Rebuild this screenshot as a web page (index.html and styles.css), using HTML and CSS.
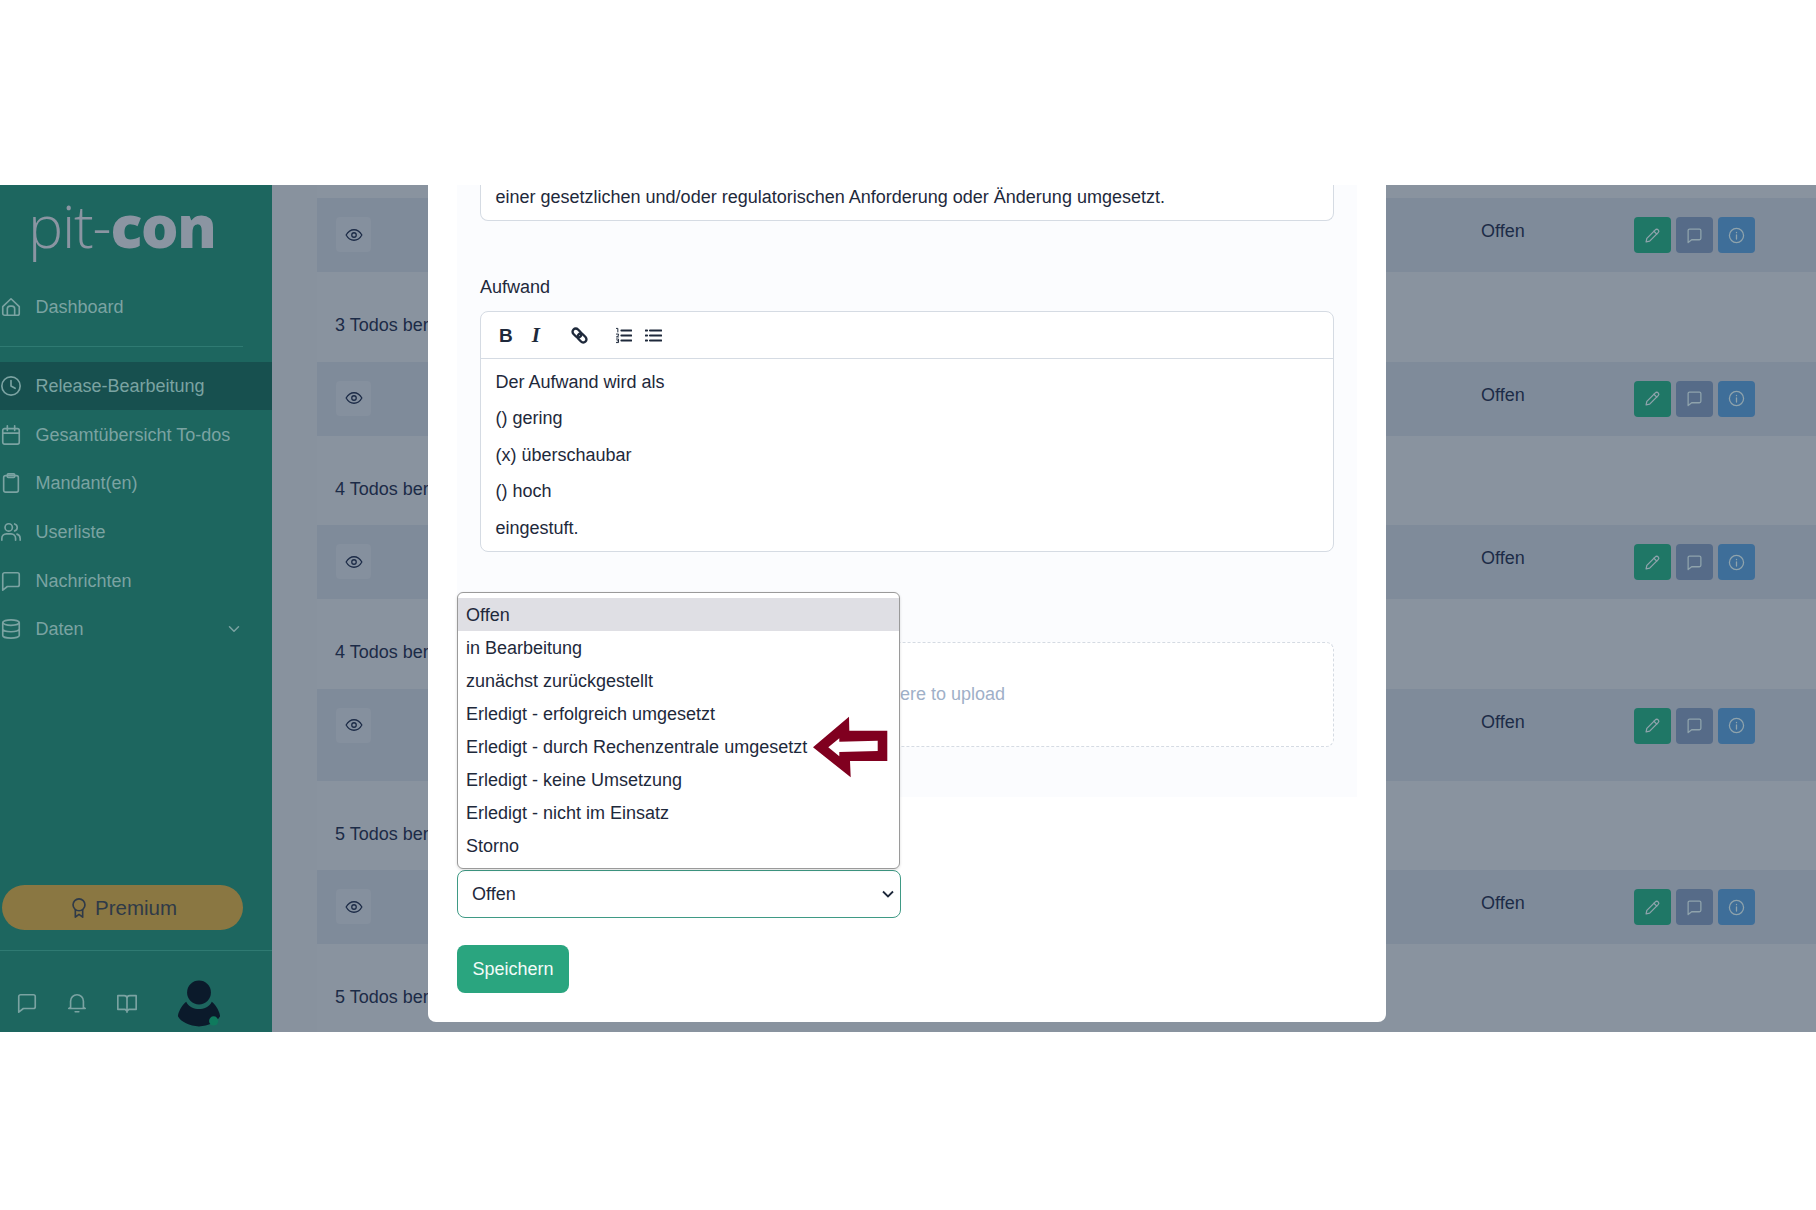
FILE: index.html
```html
<!DOCTYPE html>
<html lang="de">
<head>
<meta charset="utf-8">
<title>pit-con</title>
<link rel="stylesheet" href="styles.css">
</head>
<body>
<svg class="sprite" xmlns="http://www.w3.org/2000/svg">
  <symbol id="i-home" viewBox="0 0 24 24"><path d="M3 11.5 12 3l9 8.5V19a2 2 0 0 1-2 2H5a2 2 0 0 1-2-2z"/><path d="M8 21v-7a3 3 0 0 1 3-3h2a3 3 0 0 1 3 3v7"/></symbol>
  <symbol id="i-clock" viewBox="0 0 24 24"><circle cx="12" cy="12" r="10"/><path d="M12 6v6l4.5 2.5"/></symbol>
  <symbol id="i-cal" viewBox="0 0 24 24"><rect x="3" y="5" width="18" height="17" rx="2"/><path d="M8 2v5M16 2v5M3 10h18"/></symbol>
  <symbol id="i-clip" viewBox="0 0 24 24"><rect x="4" y="4" width="16" height="18" rx="2"/><rect x="8" y="2" width="8" height="4" rx="1"/></symbol>
  <symbol id="i-users" viewBox="0 0 24 24"><circle cx="9.5" cy="7" r="4"/><path d="M2 21v-2a5 5 0 0 1 5-5h5a5 5 0 0 1 5 5v2M16 3.2a4 4 0 0 1 0 7.6M22 21v-2a5 5 0 0 0-3.500-4.700"/></symbol>
  <symbol id="i-chat" viewBox="0 0 24 24"><path d="M3 5a2 2 0 0 1 2-2h14a2 2 0 0 1 2 2v11a2 2 0 0 1-2 2H8l-5 4z"/></symbol>
  <symbol id="i-db" viewBox="0 0 24 24"><ellipse cx="12" cy="5" rx="9" ry="3"/><path d="M3 5v14c0 1.700 4 3 9 3s9-1.300 9-3V5M3 12c0 1.700 4 3 9 3s9-1.300 9-3"/></symbol>
  <symbol id="i-down" viewBox="0 0 24 24"><path d="m6 9 6 6 6-6"/></symbol>
  <symbol id="i-award" viewBox="0 0 24 24"><circle cx="12" cy="8.500" r="6.500"/><path d="M8 14v8l4-3 4 3v-8"/></symbol>
  <symbol id="i-bell" viewBox="0 0 24 24"><path d="M5 17V10a7 7 0 0 1 14 0v7l2 1H3z"/><path d="M10 21.500h4"/></symbol>
  <symbol id="i-book" viewBox="0 0 24 24"><path d="M12 5v17M2 4h7a3 3 0 0 1 3 3 3 3 0 0 1 3-3h7v15h-8l-2 2-2-2H2z"/></symbol>
  <symbol id="i-eye" viewBox="0 0 24 24"><path d="M1.500 12S5.500 5 12 5s10.500 7 10.500 7-4 7-10.500 7S1.500 12 1.500 12z"/><circle cx="12" cy="12" r="3"/></symbol>
  <symbol id="i-pen" viewBox="0 0 24 24"><path d="M4 16 16 4a2.800 2.800 0 0 1 4 4L8 20l-5 1z"/><path d="m14 6 4 4"/></symbol>
  <symbol id="i-info" viewBox="0 0 24 24"><circle cx="12" cy="12" r="10"/><path d="M12 11v6M12 7.500v.5"/></symbol>
</svg>

<div class="app">
  <aside class="sidebar">
    <div class="logo"><span class="logo-thin">pit-</span><span class="logo-bold">con</span></div>
    <nav class="nav-top">
      <a class="nav-item"><svg class="ico"><use href="#i-home"/></svg>Dashboard</a>
    </nav>
    <div class="nav-rule"></div>
    <nav class="nav-main">
      <a class="nav-item active"><svg class="ico"><use href="#i-clock"/></svg>Release-Bearbeitung</a>
      <a class="nav-item"><svg class="ico"><use href="#i-cal"/></svg>Gesamtübersicht To-dos</a>
      <a class="nav-item"><svg class="ico"><use href="#i-clip"/></svg>Mandant(en)</a>
      <a class="nav-item"><svg class="ico"><use href="#i-users"/></svg>Userliste</a>
      <a class="nav-item"><svg class="ico"><use href="#i-chat"/></svg>Nachrichten</a>
      <a class="nav-item"><svg class="ico"><use href="#i-db"/></svg>Daten<svg class="ico-down"><use href="#i-down"/></svg></a>
    </nav>
    <div class="premium"><svg class="ico-award"><use href="#i-award"/></svg>Premium</div>
    <div class="side-foot">
      <svg class="foot-ico"><use href="#i-chat"/></svg>
      <svg class="foot-ico"><use href="#i-bell"/></svg>
      <svg class="foot-ico"><use href="#i-book"/></svg>
      <svg class="avatar" viewBox="0 0 48 50"><circle cx="24" cy="13" r="13"/><path d="M10 23c3 6 9 8 14 8s11-2 14-8c5 4 9 12 9 16-3 6-13 11-23 11S4 45 1 39c0-4 4-12 9-16z"/><circle class="avatar-dot" cx="40" cy="44" r="5"/></svg>
    </div>
  </aside>

  <main class="main">
    <div class="row-top"></div>
    <div class="row row-dark">
      <span class="eye"><svg><use href="#i-eye"/></svg></span><span class="status">Offen</span>
      <div class="actions"><span class="act act-edit"><svg><use href="#i-pen"/></svg></span><span class="act act-chat"><svg><use href="#i-chat"/></svg></span><span class="act act-info"><svg><use href="#i-info"/></svg></span></div>
    </div>
    <div class="row-light">3 Todos bereit</div>
    <div class="row row-dark">
      <span class="eye"><svg><use href="#i-eye"/></svg></span><span class="status">Offen</span>
      <div class="actions"><span class="act act-edit"><svg><use href="#i-pen"/></svg></span><span class="act act-chat"><svg><use href="#i-chat"/></svg></span><span class="act act-info"><svg><use href="#i-info"/></svg></span></div>
    </div>
    <div class="row-light">4 Todos bereit</div>
    <div class="row row-dark">
      <span class="eye"><svg><use href="#i-eye"/></svg></span><span class="status">Offen</span>
      <div class="actions"><span class="act act-edit"><svg><use href="#i-pen"/></svg></span><span class="act act-chat"><svg><use href="#i-chat"/></svg></span><span class="act act-info"><svg><use href="#i-info"/></svg></span></div>
    </div>
    <div class="row-light">4 Todos bereit</div>
    <div class="row row-dark row-tall">
      <span class="eye"><svg><use href="#i-eye"/></svg></span><span class="status">Offen</span>
      <div class="actions"><span class="act act-edit"><svg><use href="#i-pen"/></svg></span><span class="act act-chat"><svg><use href="#i-chat"/></svg></span><span class="act act-info"><svg><use href="#i-info"/></svg></span></div>
    </div>
    <div class="row-light">5 Todos bereit</div>
    <div class="row row-dark">
      <span class="eye"><svg><use href="#i-eye"/></svg></span><span class="status">Offen</span>
      <div class="actions"><span class="act act-edit"><svg><use href="#i-pen"/></svg></span><span class="act act-chat"><svg><use href="#i-chat"/></svg></span><span class="act act-info"><svg><use href="#i-info"/></svg></span></div>
    </div>
    <div class="row-light">5 Todos bereit</div>
  </main>

  <section class="modal">
    <div class="panel">
      <div class="editor-tail">einer gesetzlichen und/oder regulatorischen Anforderung oder Änderung umgesetzt.</div>
      <div class="field-label">Aufwand</div>
      <div class="editor">
        <div class="toolbar">
          <span class="tb tb-b">B</span>
          <span class="tb tb-i">I</span>
          <svg class="tb-svg tb-link" viewBox="0 0 24 24"><g transform="rotate(45 12 12)"><rect x="0" y="7.500" width="14" height="9" rx="4.500"/><rect x="10" y="7.500" width="14" height="9" rx="4.500"/></g></svg>
          <svg class="tb-svg tb-ol" viewBox="0 0 24 24"><path d="M9 5h14M9 12h14M9 19h14"/><path class="thin" d="M2 2h2v5M2 10h3v2l-3 2h3M2 17h3v5H2M3 19.500h2"/></svg>
          <svg class="tb-svg tb-ul" viewBox="0 0 24 24"><path d="M7 5h16M7 12h16M7 19h16M1 5h2M1 12h2M1 19h2"/></svg>
        </div>
        <div class="editor-body">
          <p>Der Aufwand wird als</p>
          <p>() gering</p>
          <p>(x) überschaubar</p>
          <p>() hoch</p>
          <p>eingestuft.</p>
        </div>
      </div>
      <div class="dropzone">Drop files here to upload</div>
    </div>
    <select class="status-select"><option>Offen</option></select>
    <button class="save">Speichern</button>

    <ul class="popup">
      <li class="selected">Offen</li>
      <li>in Bearbeitung</li>
      <li>zunächst zurückgestellt</li>
      <li>Erledigt - erfolgreich umgesetzt</li>
      <li>Erledigt - durch Rechenzentrale umgesetzt</li>
      <li>Erledigt - keine Umsetzung</li>
      <li>Erledigt - nicht im Einsatz</li>
      <li>Storno</li>
    </ul>
    <svg class="arrow" viewBox="0 0 76 62">
      <path class="arrow-shape" fill-rule="evenodd" d="M1 31.300 37 .7l.3 14H75.300V45H38l.7 16.300zM16.300 31.300l11 9 .0-4.300L65.700 35V24.700l-38.400 1V22.300z"/>
    </svg>
  </section>
</div>
</body>
</html>
```

FILE: styles.css
```css
* { box-sizing: border-box; }
html, body { margin: 0; padding: 0; background: #fff; }
body {
  padding-top: 185px;
  font-family: "Liberation Sans", Arial, sans-serif;
  font-size: 18px;
  line-height: 24px;
  color: #1e293b;
}
.sprite { display: none; }
svg { fill: none; stroke: currentColor; stroke-width: 2; stroke-linecap: round; stroke-linejoin: round; }

.app {
  position: relative;
  display: flex;
  height: 847px;
  overflow: hidden;
  background: #88929e;
}

/* sidebar */
.sidebar {
  flex: 0 0 272px;
  display: flex;
  flex-direction: column;
  background: #1d665f;
  color: #7ba3a2;
}
.logo {
  height: 98px;
  padding-left: 28px;
  font-family: "Open Sans", sans-serif;
  font-size: 59px;
  line-height: 80px;
  letter-spacing: -1.200px;
  color: #8b95a2;
  white-space: nowrap;
}
.logo-thin { font-weight: 300; }
.logo-bold { font-weight: 800; }
.nav-item {
  display: flex;
  align-items: center;
  height: 48.700px;
  gap: 13.500px;
}
.nav-item.active { background: #17504f; }
.ico { width: 22px; height: 22px; flex: none; stroke-width: 1.800; }
.ico-down { width: 18px; height: 18px; margin-left: auto; margin-right: 29px; }
.nav-rule { height: 1px; margin: 14.500px 29px 14.500px 0; background: #2f7a72; }
.premium {
  display: flex;
  align-items: center;
  justify-content: center;
  gap: 5px;
  width: 241px;
  height: 45px;
  margin: auto 0 0 2px;
  border-radius: 23px;
  background: #8a7742;
  color: #2f3a48;
  font-size: 20.500px;
}
.ico-award { width: 22px; height: 24px; stroke-width: 1.800; }
.side-foot {
  display: flex;
  align-items: center;
  height: 82px;
  margin-top: 20px;
  padding: 23px 0 0 16px;
  gap: 28px;
  border-top: 1px solid #2f7a72;
}
.foot-ico { width: 22px; height: 22px; color: #7ba3a2; stroke-width: 1.800; }
.avatar {
  width: 44px;
  height: 49px;
  margin-left: 11px;
  fill: #0b1a2b;
  stroke: none;
}
.avatar-dot { fill: #0f7a5d; }

/* table behind the dialog */
.main { flex: 1; min-width: 0; padding-left: 45px; }
.row-top { height: 13px; background: #89939f; }
.row {
  display: grid;
  grid-template-columns: 1145px 153px auto;
  align-items: start;
  height: 74px;
  padding: 19px 0 0 19px;
  background: #7f8b9a;
  color: #1c2b47;
}
.row-tall { height: 92px; }
.row-light {
  height: 89.500px;
  padding: 41px 0 0 18px;
  background: #89939f;
  color: #1c2b47;
  white-space: nowrap;
}
.row-light:last-child { height: 90px; }
.eye {
  display: flex;
  align-items: center;
  justify-content: center;
  width: 35px;
  height: 35px;
  border-radius: 4px;
  background: #85909e;
}
.eye svg { width: 18px; height: 18px; stroke-width: 1.700; }
.status { margin-top: 2px; }
.actions { display: flex; gap: 5px; }
.act {
  display: flex;
  align-items: center;
  justify-content: center;
  width: 37px;
  height: 36px;
  border-radius: 4px;
  color: #8fa3ac;
}
.act svg { width: 17px; height: 17px; stroke-width: 1.800; }
.act-edit { background: #1f7766; }
.act-chat { background: #566b88; }
.act-info { background: #3e6e99; }

/* dialog */
.modal {
  position: absolute;
  left: 428px;
  top: 0;
  width: 958px;
  height: 837px;
  padding: 0 29px;
  background: #fff;
  border-radius: 0 0 8px 8px;
}
.panel {
  height: 612px;
  padding: 0 23px;
  background: #fbfcfe;
}
.editor-tail {
  height: 36px;
  padding: 0 14.500px;
  background: #fff;
  border: 1px solid #d5dbe3;
  border-top: 0;
  border-radius: 0 0 8px 8px;
  white-space: nowrap;
}
.field-label { margin-top: 54px; margin-bottom: 12px; }
.editor {
  height: 241px;
  background: #fff;
  border: 1px solid #d5dbe3;
  border-radius: 8px;
}
.toolbar {
  height: 47px;
  display: flex;
  align-items: center;
  padding-top: 1px;
  border-bottom: 1px solid #d5dbe3;
}
.tb { line-height: 1; color: #1e293b; }
.tb-b { margin-left: 18px; font-weight: 700; font-size: 19px; }
.tb-i { margin-left: 19px; font-family: "Liberation Serif", serif; font-style: italic; font-weight: 700; font-size: 21px; }
.tb-svg { width: 17px; height: 17px; color: #1e293b; flex: none; }
.tb-link { margin-left: 31px; stroke-width: 3.400; }
.tb-ol { margin-left: 27px; stroke-width: 2.800; }
.tb-ol .thin { stroke-width: 1.400; }
.tb-ul { margin-left: 13px; stroke-width: 2.800; }
.editor-body { padding: 11px 14.500px 0; }
.editor-body p { margin: 0 0 12.400px; }
.dropzone {
  display: flex;
  align-items: center;
  justify-content: center;
  height: 105px;
  margin-top: 90px;
  padding-bottom: 2px;
  background: #fff;
  border: 1px dashed #d5dbe3;
  border-radius: 8px;
  color: #9fb0c8;
}
.status-select {
  display: block;
  width: 444px;
  height: 48px;
  margin-top: 73px;
  padding: 0 14px;
  appearance: none;
  background: #fff url("data:image/svg+xml,%3Csvg xmlns='http://www.w3.org/2000/svg' viewBox='0 0 12 8'%3E%3Cpath d='M1 1.500l5 5 5-5' fill='none' stroke='%231e293b' stroke-width='1.800'/%3E%3C/svg%3E") no-repeat right 6px center / 12px 8px;
  border: 1px solid #3f9a85;
  border-radius: 8px;
  font: inherit;
  color: #1e293b;
}
.save {
  display: block;
  width: 112px;
  height: 48px;
  margin-top: 27px;
  padding: 0;
  border: 0;
  border-radius: 8px;
  background: #2aa57f;
  color: #f2fbf8;
  font: inherit;
}
.popup {
  position: absolute;
  left: 28.500px;
  top: 406.500px;
  width: 443px;
  height: 277px;
  margin: 0;
  padding: 5.500px 0 0;
  list-style: none;
  background: #fff;
  border: 1px solid #9a9a9a;
  border-radius: 6px;
  box-shadow: 0 1px 3px rgba(0, 0, 0, .15);
}
.popup li {
  height: 33px;
  padding: 1px 8.500px 0;
  line-height: 33px;
  white-space: nowrap;
}
.popup .selected { background: #dfdfe4; }
.arrow {
  position: absolute;
  left: 383.500px;
  top: 531px;
  width: 76px;
  height: 62px;
  stroke: none;
}
.arrow-shape { fill: #80001f; }
```
